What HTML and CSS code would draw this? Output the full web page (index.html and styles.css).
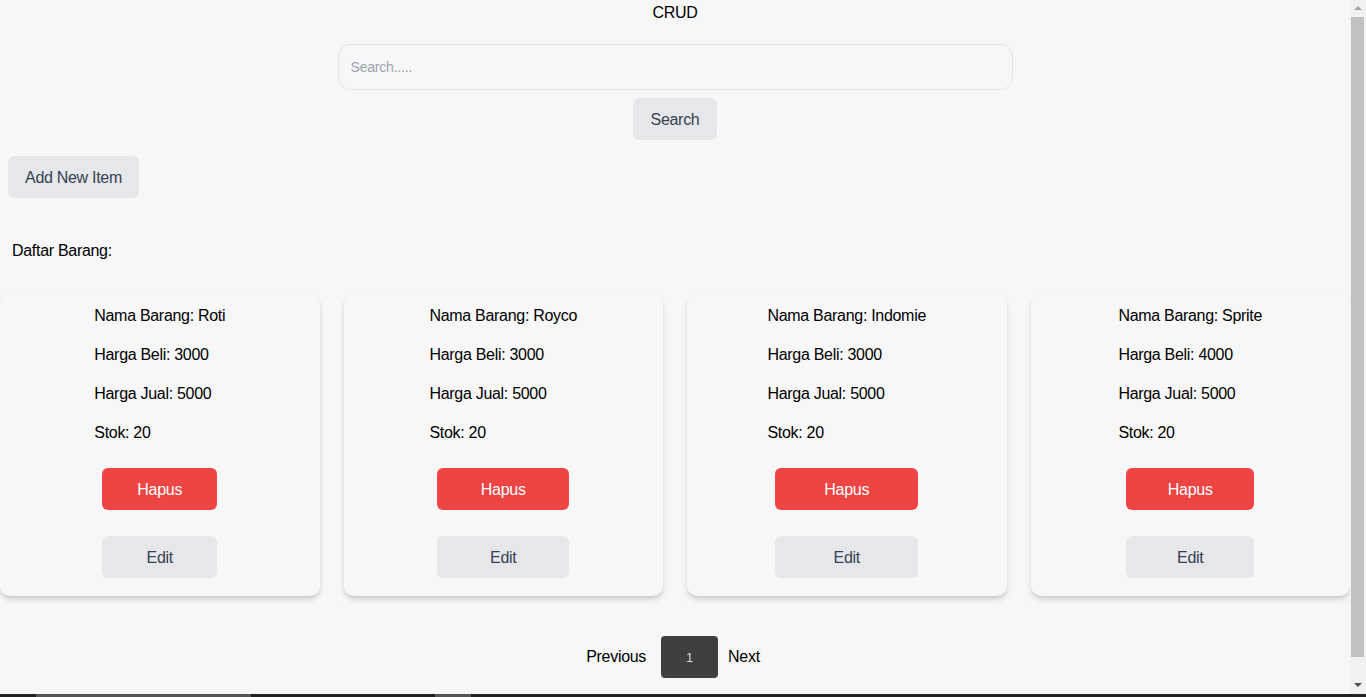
FILE: index.html
```html
<!DOCTYPE html>
<html lang="id">
<head>
<meta charset="utf-8">
<title>CRUD</title>
<link rel="stylesheet" href="styles.css">
</head>
<body>
<div class="page">
  <h1 class="title">CRUD</h1>
  <form class="search-form">
    <input class="search-input" type="text" placeholder="Search.....">
    <button class="btn btn-gray search-btn" type="button">Search</button>
  </form>
  <div class="add-row">
    <button class="btn btn-gray add-btn" type="button">Add New Item</button>
  </div>
  <p class="list-title">Daftar Barang:</p>
  <div class="grid">
    <div class="card">
      <div class="card-body">
        <p class="line">Nama Barang: Roti</p>
        <p class="line">Harga Beli: 3000</p>
        <p class="line">Harga Jual: 5000</p>
        <p class="line">Stok: 20</p>
        <div class="actions">
          <button class="btn btn-red" type="button">Hapus</button>
          <button class="btn btn-gray" type="button">Edit</button>
        </div>
      </div>
    </div>
    <div class="card">
      <div class="card-body">
        <p class="line">Nama Barang: Royco</p>
        <p class="line">Harga Beli: 3000</p>
        <p class="line">Harga Jual: 5000</p>
        <p class="line">Stok: 20</p>
        <div class="actions">
          <button class="btn btn-red" type="button">Hapus</button>
          <button class="btn btn-gray" type="button">Edit</button>
        </div>
      </div>
    </div>
    <div class="card">
      <div class="card-body">
        <p class="line">Nama Barang: Indomie</p>
        <p class="line">Harga Beli: 3000</p>
        <p class="line">Harga Jual: 5000</p>
        <p class="line">Stok: 20</p>
        <div class="actions">
          <button class="btn btn-red" type="button">Hapus</button>
          <button class="btn btn-gray" type="button">Edit</button>
        </div>
      </div>
    </div>
    <div class="card">
      <div class="card-body">
        <p class="line">Nama Barang: Sprite</p>
        <p class="line">Harga Beli: 4000</p>
        <p class="line">Harga Jual: 5000</p>
        <p class="line">Stok: 20</p>
        <div class="actions">
          <button class="btn btn-red" type="button">Hapus</button>
          <button class="btn btn-gray" type="button">Edit</button>
        </div>
      </div>
    </div>
  </div>
  <div class="pagination">
    <button class="page-link prev" type="button">Previous</button>
    <button class="page-num" type="button">1</button>
    <button class="page-link next" type="button">Next</button>
  </div>
</div>
<div class="scrollbar">
  <span class="sb-arrow sb-up"></span>
  <span class="sb-thumb"></span>
  <span class="sb-arrow sb-down"></span>
</div>
<div class="taskbar"><span class="tb-seg tb-a"></span><span class="tb-seg tb-b"></span></div>
</body>
</html>
```
FILE: styles.css
```css
* { box-sizing: border-box; }
html, body { margin: 0; padding: 0; }
body {
  background: #f7f7f7;
  font-family: "Liberation Sans", Arial, sans-serif;
  font-size: 16px;
  line-height: 24px;
  letter-spacing: -0.3px;
  color: #000;
}
.page {
  width: 1350px;
  padding-top: 1px;
  padding-bottom: 16px;
}
.title {
  margin: 0;
  font-size: 16px;
  font-weight: normal;
  line-height: 24px;
  text-align: center;
}
.search-form {
  margin-top: 19px;
  display: flex;
  flex-direction: column;
  align-items: center;
  gap: 8px;
}
.search-input {
  width: 675px;
  height: 46px;
  border: 1px solid #e6e6e6;
  border-radius: 12px;
  background: #f7f7f7;
  padding: 0 12px;
  font-family: inherit;
  font-size: 14px;
  letter-spacing: -0.2px;
  color: #111;
  outline: none;
}
.search-input::placeholder { color: #9ca3af; }
.btn {
  border: 0;
  border-radius: 6px;
  height: 42px;
  padding: 0;
  font-family: inherit;
  font-size: 16px;
  line-height: 24px;
  letter-spacing: -0.3px;
  padding-top: 1px;
  cursor: pointer;
}
.btn-gray { background: #e5e7eb; color: #374151; }
.btn-red { background: #ef4444; color: #fff; }
.search-btn { width: 84px; }
.add-row {
  margin-top: 16px;
  padding-left: 8px;
}
.add-btn { width: 131px; }
.list-title {
  margin: 41px 0 0 12px;
}
.grid {
  margin-top: 31px;
  display: grid;
  grid-template-columns: repeat(4, 1fr);
  gap: 24px;
}
.card {
  background: #f7f7f7;
  border-radius: 10px;
  box-shadow: 0 4px 6px -1px rgba(0,0,0,0.16), 0 2px 4px -2px rgba(0,0,0,0.12);
  padding: 10px 0 18px;
  display: flex;
  justify-content: center;
}
.card-body {
  width: max-content;
  display: flex;
  flex-direction: column;
}
.line {
  margin: 0 0 15px;
}
.line:nth-child(4) { margin-bottom: 0; }
.actions {
  margin-top: 23px;
  padding: 0 8px;
  display: flex;
  flex-direction: column;
  gap: 26px;
}
.actions .btn { width: 100%; }
.pagination {
  margin-top: 40px;
  display: flex;
  justify-content: center;
  align-items: center;
  padding-right: 4px;
}
.page-link {
  background: none;
  border: 0;
  padding: 0;
  font-family: inherit;
  font-size: 16px;
  line-height: 24px;
  letter-spacing: -0.3px;
  color: #000;
}
.prev { margin-right: 15px; }
.next { margin-left: 10px; }
.page-num {
  width: 57px;
  height: 42px;
  border: 0;
  border-radius: 4px;
  background: #3f3f3f;
  color: #d4d4d4;
  font-family: inherit;
  font-size: 13px;
}
.scrollbar {
  position: fixed;
  top: 0;
  right: 0;
  width: 16px;
  height: 694px;
  background: #f1f1f1;
}
.sb-thumb {
  position: absolute;
  left: 1px;
  top: 17px;
  width: 13px;
  height: 640px;
  background: #c1c1c1;
}
.sb-arrow {
  position: absolute;
  left: 4px;
  width: 0;
  height: 0;
  border-left: 4px solid transparent;
  border-right: 4px solid transparent;
}
.sb-up {
  top: 6px;
  border-bottom: 4px solid #a3a3a3;
}
.sb-down {
  top: 683px;
  border-top: 4px solid #505050;
}
.taskbar {
  position: fixed;
  left: 0;
  right: 0;
  bottom: 0;
  height: 3px;
  background: #222;
}
.tb-seg {
  position: absolute;
  top: 0;
  height: 3px;
  background: #555;
}
.tb-a { left: 36px; width: 215px; }
.tb-b { left: 435px; width: 36px; }
```
